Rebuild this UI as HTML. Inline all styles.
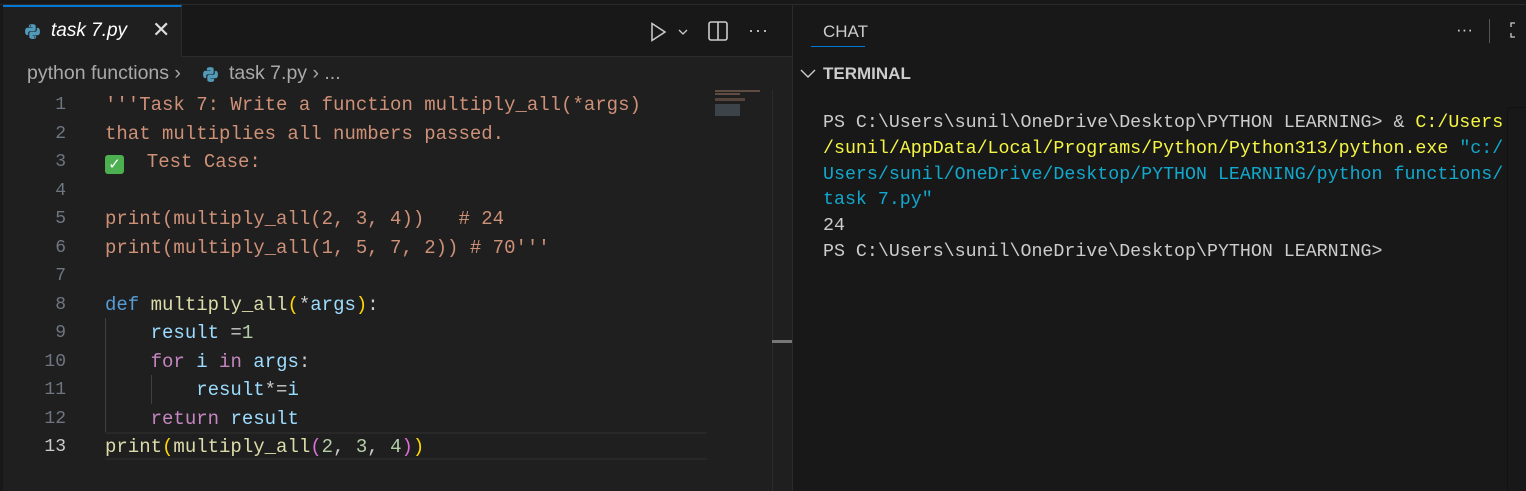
<!DOCTYPE html>
<html><head><meta charset="utf-8"><style>
*{margin:0;padding:0;box-sizing:border-box}
body{width:1526px;height:491px;background:#181818;overflow:hidden;position:relative;font-family:"Liberation Sans",sans-serif}
.abs{position:absolute}
.mono{font-family:"Liberation Mono","DejaVu Sans Mono",monospace}
.ln{position:absolute;left:0;width:66px;text-align:right;color:#6e7681;font-size:18px}
.code{position:absolute;left:105px;font-size:19px;color:#ccc;white-space:pre}
.s{color:#ce9178}.k{color:#569cd6}.f{color:#dcdcaa}.v{color:#9cdcfe}.c{color:#c586c0}.n{color:#b5cea8}.y{color:#ffd700}.p{color:#da70d6}
.t{position:absolute;left:823px;top:0;font-size:18.3px;color:#cccccc;white-space:pre}
</style></head><body>
<div class="abs" style="left:0;top:0;width:1526px;height:5px;background:#181818;border-bottom:1px solid #2b2b2b"></div>
<div class="abs" style="left:3px;top:5px;width:789px;height:486px;background:#1f1f1f"></div>
<div class="abs" style="left:3px;top:5px;width:789px;height:52px;background:#181818;border-bottom:1px solid #2b2b2b"></div>
<div class="abs" style="left:3px;top:5px;width:179px;height:52px;background:#1f1f1f;border-top:2px solid #0078d4;border-right:1px solid #2b2b2b"></div>
<svg class="abs" style="left:24px;top:23px" width="17" height="17" viewBox="0 0 16 16"><path d="M7.9 1C4.4 1 4.6 2.5 4.6 2.5V4h3.4v.5H3.2S1 4.3 1 7.9s1.9 3.5 1.9 3.5H4V9.7s-.1-1.9 1.9-1.9h3.3s1.8 0 1.8-1.8V2.9S11.3 1 7.9 1zM6 2.1a.6.6 0 1 1 0 1.2.6.6 0 0 1 0-1.2z" fill="#519aba"/><path d="M8.1 15c3.5 0 3.3-1.5 3.3-1.5V12H8v-.5h4.8s2.2.2 2.2-3.4-1.9-3.5-1.9-3.5H12v1.7s.1 1.9-1.9 1.9H6.8S5 8.2 5 10v3.1S4.7 15 8.1 15zm1.9-1.1a.6.6 0 1 1 0-1.2.6.6 0 0 1 0 1.2z" fill="#519aba"/></svg>
<div class="abs" style="left:51px;top:20px;font-size:19px;font-style:italic;color:#fff">task 7.py</div>
<div class="abs" style="left:152px;top:17px;font-size:22px;color:#ddd">✕</div>
<svg class="abs" style="left:650px;top:22px" width="45" height="20"><path d="M2 1.5 L15 10 L2 18.5Z" fill="none" stroke="#ccc" stroke-width="1.5"/><path d="M29 8l4 4 4-4" fill="none" stroke="#ccc" stroke-width="1.3"/></svg>
<svg class="abs" style="left:708px;top:21px" width="20" height="20"><rect x="1" y="1" width="18" height="18" rx="2" fill="none" stroke="#ccc" stroke-width="1.6"/><line x1="10" y1="1" x2="10" y2="19" stroke="#ccc" stroke-width="1.6"/></svg>
<div class="abs" style="left:748px;top:20px;font-size:18px;color:#ccc;letter-spacing:1px">···</div>
<div class="abs" style="left:27px;top:62px;font-size:19.5px;color:#a9a9a9">python functions ›</div>
<svg class="abs" style="left:202px;top:66px" width="17" height="17" viewBox="0 0 16 16"><path d="M7.9 1C4.4 1 4.6 2.5 4.6 2.5V4h3.4v.5H3.2S1 4.3 1 7.9s1.9 3.5 1.9 3.5H4V9.7s-.1-1.9 1.9-1.9h3.3s1.8 0 1.8-1.8V2.9S11.3 1 7.9 1z" fill="#519aba"/><path d="M8.1 15c3.5 0 3.3-1.5 3.3-1.5V12H8v-.5h4.8s2.2.2 2.2-3.4-1.9-3.5-1.9-3.5H12v1.7s.1 1.9-1.9 1.9H6.8S5 8.2 5 10v3.1S4.7 15 8.1 15z" fill="#519aba"/></svg>
<div class="abs" style="left:229px;top:62px;font-size:19.5px;color:#a9a9a9">task 7.py › ...</div>
<div class="abs" style="left:105px;top:432px;width:602px;height:28px;border-top:2px solid #282828;border-bottom:2px solid #282828"></div>
<div class="abs" style="left:105px;top:318px;width:1px;height:114px;background:#404040"></div>
<div class="abs" style="left:151px;top:375px;width:1px;height:29px;background:#404040"></div>
<div class="mono" style="position:absolute;left:0;top:91px;line-height:28.5px"><div class="ln" style="top:0">1</div><div class="ln" style="top:28.5px">2</div><div class="ln" style="top:57px">3</div><div class="ln" style="top:85.5px">4</div><div class="ln" style="top:114px">5</div><div class="ln" style="top:142.5px">6</div><div class="ln" style="top:171px">7</div><div class="ln" style="top:199.5px">8</div><div class="ln" style="top:228px">9</div><div class="ln" style="top:256.5px">10</div><div class="ln" style="top:285px">11</div><div class="ln" style="top:313.5px">12</div><div class="ln" style="top:342px;color:#ccc">13</div><div class="code" style="top:0"><span class="s">'''Task 7: Write a function multiply_all(*args)
that multiplies all numbers passed.
</span><span style="display:inline-block;width:19px;height:19px;background:#4caf50;border-radius:3px;color:#fff;font-size:15px;text-align:center;line-height:19px;vertical-align:-2px;font-family:'DejaVu Sans'">✓</span><span class="s">  Test Case:

print(multiply_all(2, 3, 4))   # 24
print(multiply_all(1, 5, 7, 2)) # 70'''</span>

<span class="k">def</span> <span class="f">multiply_all</span><span class="y">(</span>*<span class="v">args</span><span class="y">)</span>:
    <span class="v">result</span> =<span class="n">1</span>
    <span class="c">for</span> <span class="v">i</span> <span class="c">in</span> <span class="v">args</span>:
        <span class="v">result</span>*=<span class="v">i</span>
    <span class="c">return</span> <span class="v">result</span>
<span class="f">print</span><span class="y">(</span><span class="f">multiply_all</span><span class="p">(</span><span class="n">2</span>, <span class="n">3</span>, <span class="n">4</span><span class="p">)</span><span class="y">)</span></div></div>
<div class="abs" style="left:715px;top:90px;width:45px;height:2px;background:#8a6a5a;opacity:.6"></div>
<div class="abs" style="left:715px;top:93px;width:25px;height:2px;background:#8a6a5a;opacity:.6"></div>
<div class="abs" style="left:715px;top:98px;width:30px;height:3px;background:#8a6a5a;opacity:.5"></div>
<div class="abs" style="left:715px;top:104px;width:25px;height:12px;background:#6a7a8a;opacity:.4"></div>
<div class="abs" style="left:772px;top:90px;width:20px;height:401px;border-left:1px solid #2b2b2b"></div>
<div class="abs" style="left:772px;top:340px;width:20px;height:3px;background:#777"></div>
<div class="abs" style="left:792px;top:5px;width:1px;height:486px;background:#2b2b2b"></div>
<div class="abs" style="left:823px;top:22px;font-size:17px;color:#ccc">CHAT</div>
<div class="abs" style="left:811px;top:46px;width:54px;height:1px;background:#0078d4"></div>
<div class="abs" style="left:1456px;top:20px;font-size:17px;color:#ccc">···</div>
<div class="abs" style="left:1489px;top:19px;width:1px;height:24px;background:#555"></div>
<svg class="abs" style="left:1510px;top:22px" width="16" height="16"><path d="M1 5V1h4M1 11v4h4" fill="none" stroke="#ccc" stroke-width="1.3"/></svg>
<svg class="abs" style="left:800px;top:68px" width="16" height="12"><path d="M1 2l7 7 7-7" fill="none" stroke="#ccc" stroke-width="1.4"/></svg>
<div class="abs" style="left:823px;top:64px;font-size:17px;font-weight:bold;color:#ccc">TERMINAL</div>
<div class="abs" style="left:1507px;top:107px;width:19px;height:384px;border-left:1px solid #111;border-top:1px solid #111"></div>
<div class="mono" style="position:absolute;left:0;top:111px;line-height:25.8px"><div class="t">PS C:\Users\sunil\OneDrive\Desktop\PYTHON LEARNING&gt; &amp; <span style="color:#f5f543">C:/Users
/sunil/AppData/Local/Programs/Python/Python313/python.exe</span> <span style="color:#11a8cd">"c:/
Users/sunil/OneDrive/Desktop/PYTHON LEARNING/python functions/
task 7.py"</span>
24
PS C:\Users\sunil\OneDrive\Desktop\PYTHON LEARNING&gt;</div></div>
</body></html>
